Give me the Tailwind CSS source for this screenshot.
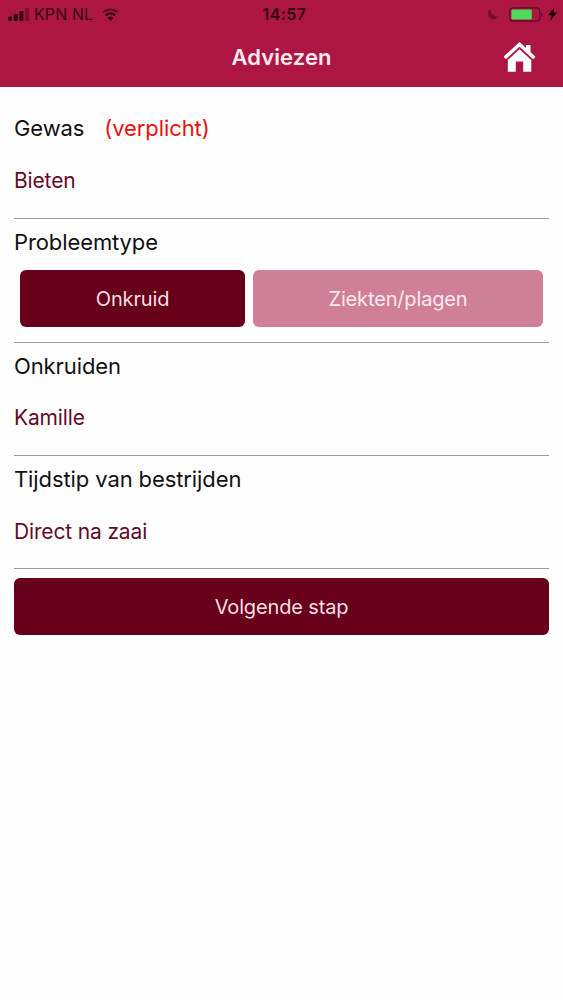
<!DOCTYPE html>
<html lang="nl">
<head>
    <meta charset="UTF-8">
    <meta name="viewport" content="width=device-width, initial-scale=1.0">
    <title>Adviezen</title>
    <script src="https://cdn.jsdelivr.net/npm/@tailwindcss/browser@4"></script>
</head>
<body class="min-h-screen bg-[#fefefe] font-['Inter',sans-serif] text-[22px] leading-[28px] tracking-[-0.1px] text-[#111114]">
    <!-- Header -->
    <header class="h-[87px] bg-[#ad1642]">
        <!-- Status bar -->
        <div class="grid h-7 grid-cols-3 items-center pl-2 pr-1.5 text-[#330613]">
            <div class="flex items-center">
                <svg class="h-[13px] w-[22px]" viewBox="0 0 22 13" fill="currentColor">
                    <rect x="0" y="8.5" width="4" height="4.5" rx="1"/>
                    <rect x="5.7" y="6" width="4" height="7" rx="1"/>
                    <rect x="11.4" y="3" width="4" height="10" rx="1"/>
                    <rect x="17.2" y="0" width="4" height="13" rx="1" opacity=".4"/>
                </svg>
                <span class="ml-1 text-[16px] tracking-[0.1px] whitespace-nowrap">KPN NL</span>
                <svg class="ml-[9px] h-[13px] w-[17px]" viewBox="0 0 17 13" fill="none" stroke="currentColor">
                    <path d="M1.2 4.4a10.4 10.4 0 0 1 14.6 0" stroke-width="2" opacity=".65"/>
                    <path d="M3.8 7.3a6.7 6.7 0 0 1 9.4 0" stroke-width="2.4"/>
                    <path d="M8.5 12.9 5.5 9.7a4.2 4.2 0 0 1 6 0z" fill="currentColor" stroke="none"/>
                </svg>
            </div>
            <span class="pl-1 text-center text-[16px] font-semibold tracking-[0.4px]">14:57</span>
            <div class="flex items-center justify-end">
                <svg class="mr-2.5 h-3 w-3" viewBox="0 0 12 12" fill="currentColor" opacity=".45">
                    <path d="M3.2 .8A5.8 5.8 0 1 0 11.3 9 8.500 8.500 0 0 1 3.2 .8z"/>
                </svg>
                <svg class="h-[15px] w-[35px]" viewBox="0 0 35 15">
                    <rect x=".8" y=".8" width="30" height="13.4" rx="3.2" fill="none" stroke="#5d0b24" stroke-width="1.2"/>
                    <rect x="2.4" y="2.6" width="20.4" height="9.8" rx="1.2" fill="#4fd95f"/>
                    <path d="M32.3 5v5c1.7-.6 1.7-4.4 0-5z" fill="#5d0b24"/>
                </svg>
                <svg class="ml-1 h-3.5 w-[9px]" viewBox="0 0 9 14" fill="#16040a">
                    <path d="M6.6 0 0 8.2h3.6L2.2 14 9 5.4H5.4z"/>
                </svg>
            </div>
        </div>
        <!-- Title bar -->
        <div class="grid h-[58px] grid-cols-[1fr_auto_1fr] items-center pr-[27px] pl-[27px]">
            <h1 class="col-start-2 text-[22px] font-semibold tracking-[0.1px] text-[#fbe9ee]">Adviezen</h1>
            <svg class="h-8 w-8 justify-self-end" viewBox="0 0 32 32" fill="#fff">
                <path d="M15.5 1 22 7V4h4.500v7L31.500 15.700 29.200 18.300 15.500 5.800 1.900 18.300-.4 15.700z"/>
                <path d="M15.5 8.2 27.300 19V30.800H19.200V20.500h-7.400V30.800H3.800V19z"/>
            </svg>
        </div>
    </header>

    <!-- Form -->
    <main class="px-3.5 pt-[18px]">
        <section class="h-[114px] border-b border-[#9a9a9c] pt-[9px]">
            <h2 class="flex gap-5">Gewas <span class="text-[#e8120f]">(verplicht)</span></h2>
            <p class="mt-[25px] text-[21px] tracking-[-0.15px] text-[#640a2a]">Bieten</p>
        </section>

        <section class="h-[124px] border-b border-[#9a9a9c] pt-[9px]">
            <h2>Probleemtype</h2>
            <div class="mt-3.5 flex gap-2 pr-[6px] pl-[6px] text-[20px] tracking-[-0.15px]">
                <button class="h-[57px] w-[225px] rounded-md bg-[#68001b] text-[#f5dfe4]">Onkruid</button>
                <button class="h-[57px] flex-1 rounded-md bg-[#d07f98] text-[#fdeaf0]">Ziekten/plagen</button>
            </div>
        </section>

        <section class="h-[113px] border-b border-[#9a9a9c] pt-[9px]">
            <h2>Onkruiden</h2>
            <p class="mt-6 text-[21px] tracking-[-0.15px] text-[#640a2a]">Kamille</p>
        </section>

        <section class="h-[113px] border-b border-[#9a9a9c] pt-[9px]">
            <h2>Tijdstip van bestrijden</h2>
            <p class="mt-[25px] text-[21px] tracking-[-0.15px] text-[#640a2a]">Direct na zaai</p>
        </section>

        <button class="mt-[9px] h-[57px] w-full rounded-md bg-[#68001b] text-[20px] tracking-[-0.15px] text-[#f5dfe4]">Volgende stap</button>
    </main>
</body>
</html>
